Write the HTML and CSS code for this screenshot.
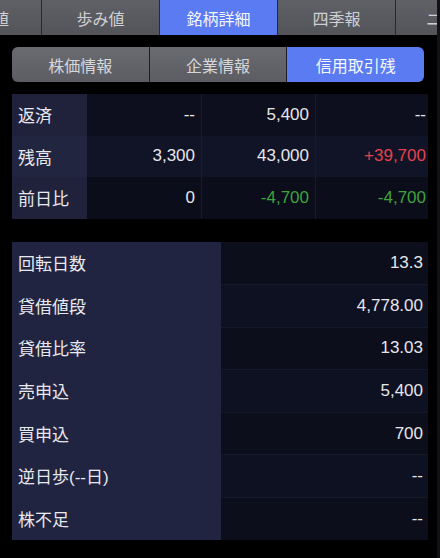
FILE: index.html
```html
<!DOCTYPE html>
<html lang="ja">
<head>
<meta charset="utf-8">
<link rel="stylesheet" href="styles.css">
</head>
<body>
<div class="screen">
  <div class="tabs">
    <div class="tab tab-edge-left"><span>値</span></div>
    <div class="tab">歩み値</div>
    <div class="tab active">銘柄詳細</div>
    <div class="tab">四季報</div>
    <div class="tab tab-edge-right"><span>ニ</span></div>
  </div>

  <div class="segments">
    <div class="seg">株価情報</div>
    <div class="seg">企業情報</div>
    <div class="seg active">信用取引残</div>
  </div>

  <div class="table1">
    <div class="row r1">
      <div class="lbl">返済</div>
      <div class="val">--</div>
      <div class="val">5,400</div>
      <div class="val">--</div>
    </div>
    <div class="row r2">
      <div class="lbl">残高</div>
      <div class="val">3,300</div>
      <div class="val">43,000</div>
      <div class="val red">+39,700</div>
    </div>
    <div class="row r3">
      <div class="lbl">前日比</div>
      <div class="val">0</div>
      <div class="val green">-4,700</div>
      <div class="val green">-4,700</div>
    </div>
  </div>

  <div class="table2">
    <div class="row2 a"><div class="lbl">回転日数</div><div class="val">13.3</div></div>
    <div class="row2 b"><div class="lbl">貸借値段</div><div class="val">4,778.00</div></div>
    <div class="row2 a"><div class="lbl">貸借比率</div><div class="val">13.03</div></div>
    <div class="row2 b"><div class="lbl">売申込</div><div class="val">5,400</div></div>
    <div class="row2 a"><div class="lbl">買申込</div><div class="val">700</div></div>
    <div class="row2 b"><div class="lbl">逆日歩(--日)</div><div class="val">--</div></div>
    <div class="row2 a"><div class="lbl">株不足</div><div class="val">--</div></div>
  </div>
</div>
</body>
</html>
```
FILE: styles.css
```css
* { box-sizing: border-box; }
html, body {
  margin: 0;
  padding: 0;
  background: #000;
}
body {
  width: 440px;
  height: 558px;
  overflow: hidden;
  font-family: "Liberation Sans", "Noto Sans CJK JP", sans-serif;
  color: #e6e6ea;
}
.screen {
  width: 440px;
  height: 558px;
  background: #000;
  border-right: 3px solid #121214;
  overflow: hidden;
}

/* top tab bar */
.tabs {
  display: flex;
  height: 35px;
  margin-left: -76px;
  width: 592px;
}
.tab {
  flex: 0 0 118px;
  height: 35px;
  display: flex;
  align-items: center;
  justify-content: center;
  font-size: 16px;
  color: #cfd0d4;
  background: linear-gradient(#606167, #53545a);
  border-right: 1px solid #2a2a2e;
}
.tab.active {
  background: #5a7bf2;
  color: #f4f6ff;
}
.tab-edge-left { justify-content: flex-end; padding-right: 32px; }
.tab-edge-right { justify-content: flex-start; padding-left: 30px; }

/* segmented control */
.segments {
  display: flex;
  margin: 12px 13px 0 12px;
  height: 35px;
  border-radius: 6px;
  overflow: hidden;
  background: #222;
}
.seg {
  flex: 1;
  display: flex;
  align-items: center;
  justify-content: center;
  font-size: 16px;
  color: #d6d7db;
  background: linear-gradient(#6a6b71, #5c5d63);
  border-right: 1px solid #1e1e22;
}
.seg:last-child { border-right: none; }
.seg.active {
  background: #5a7bf2;
  color: #f6f8ff;
}

/* first table */
.table1 {
  margin: 12px 12px 0 12px;
  width: 416px;
}
.row {
  display: grid;
  grid-template-columns: 75px 115px 114px 112px;
  height: 41.5px;
}
.row .lbl {
  background: #20223c;
  display: flex;
  align-items: center;
  padding-left: 6px;
  font-size: 17px;
  color: #e8e8ee;
}
.row .val {
  display: flex;
  align-items: center;
  justify-content: flex-end;
  padding-right: 6px;
  font-size: 17px;
  border-right: 1px solid #181b2c;
}
.row .val:last-child { border-right: none; padding-right: 2px; }
.r1 .val { background: #0d0f1e; }
.r2 .val { background: #111326; }
.r3 .val { background: #0b0d1a; }
.r2 .lbl { background: #222540; }
.red { color: #e3434f !important; }
.green { color: #3fa33a !important; }

/* second table */
.table2 {
  margin: 23px 12px 0 12px;
  width: 416px;
}
.row2 {
  display: grid;
  grid-template-columns: 209px 207px;
  height: 42.6px;
}
.row2 .lbl {
  background: #212440;
  display: flex;
  align-items: center;
  padding-left: 6px;
  font-size: 17px;
  color: #e8e8ee;
}
.row2 .val {
  display: flex;
  align-items: center;
  justify-content: flex-end;
  padding-right: 5px;
  font-size: 17px;
  border-top: 1px solid #151829;
}
.row2:first-child .val { border-top: none; }
.row2.a .val { background: #0c0e1c; }
.row2.b .val { background: #0e1122; }
```
